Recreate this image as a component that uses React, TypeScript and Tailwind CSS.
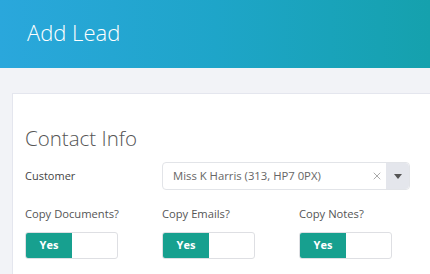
import { X } from "lucide-react";

const switches = ["Copy Documents?", "Copy Emails?", "Copy Notes?"];

function YesNo() {
  return (
    <div className="flex h-[27px] w-[93px] overflow-hidden rounded-[3px] border border-[#dedfe3] bg-white">
      <div className="flex w-[46px] items-center justify-center bg-[#17a08f] text-[11px] font-bold text-white">
        Yes
      </div>
      <div className="flex-1" />
    </div>
  );
}

export default function App() {
  return (
    <div className="h-[274px] w-[430px] overflow-hidden bg-[#f2f3f7] font-['Open_Sans',sans-serif]">
      <div className="flex h-[68px] items-center bg-gradient-to-r from-[#2aa7dc] via-[#1ea5c9] to-[#15a1ad] pl-[27px] pb-[4px]">
        <h1 className="text-[22px] font-light text-white">Add Lead</h1>
      </div>

      <div className="pl-[12px] pt-[25px]">
        <div className="h-[200px] border-t border-l border-[#e4e6ee] bg-white pl-[12px] pt-[30px]">
          <h2 className="text-[20.5px] leading-[28px] font-light text-[#555]">Contact Info</h2>

          <div className="mt-[10px] flex items-center">
            <div className="w-[137px] shrink-0 text-[11px] text-[#444]">Customer</div>
            <div className="flex h-[28px] w-[248px] shrink-0 items-center rounded-[4px] border border-[#e2e4e8] bg-white">
              <span className="flex-1 pl-[10px] text-[11.3px] text-[#666]">Miss K Harris (313, HP7 0PX)</span>
              <X size={12} strokeWidth={1.8} className="mr-[3px] text-[#a0a0a0]" />
              <div className="flex h-full w-[23px] items-center justify-center rounded-r-[4px] bg-[#e4e6ec]">
                <svg width="8" height="5" viewBox="0 0 8 5">
                  <path d="M0 0h8L4 5z" fill="#555" />
                </svg>
              </div>
            </div>
          </div>

          <div className="mt-[14px] flex">
            {switches.map((s) => (
              <div key={s} className="w-[137px] shrink-0">
                <div className="text-[11.2px] leading-[20px] text-[#555]">{s}</div>
                <div className="mt-[8px]">
                  <YesNo />
                </div>
              </div>
            ))}
          </div>
        </div>
      </div>
    </div>
  );
}
